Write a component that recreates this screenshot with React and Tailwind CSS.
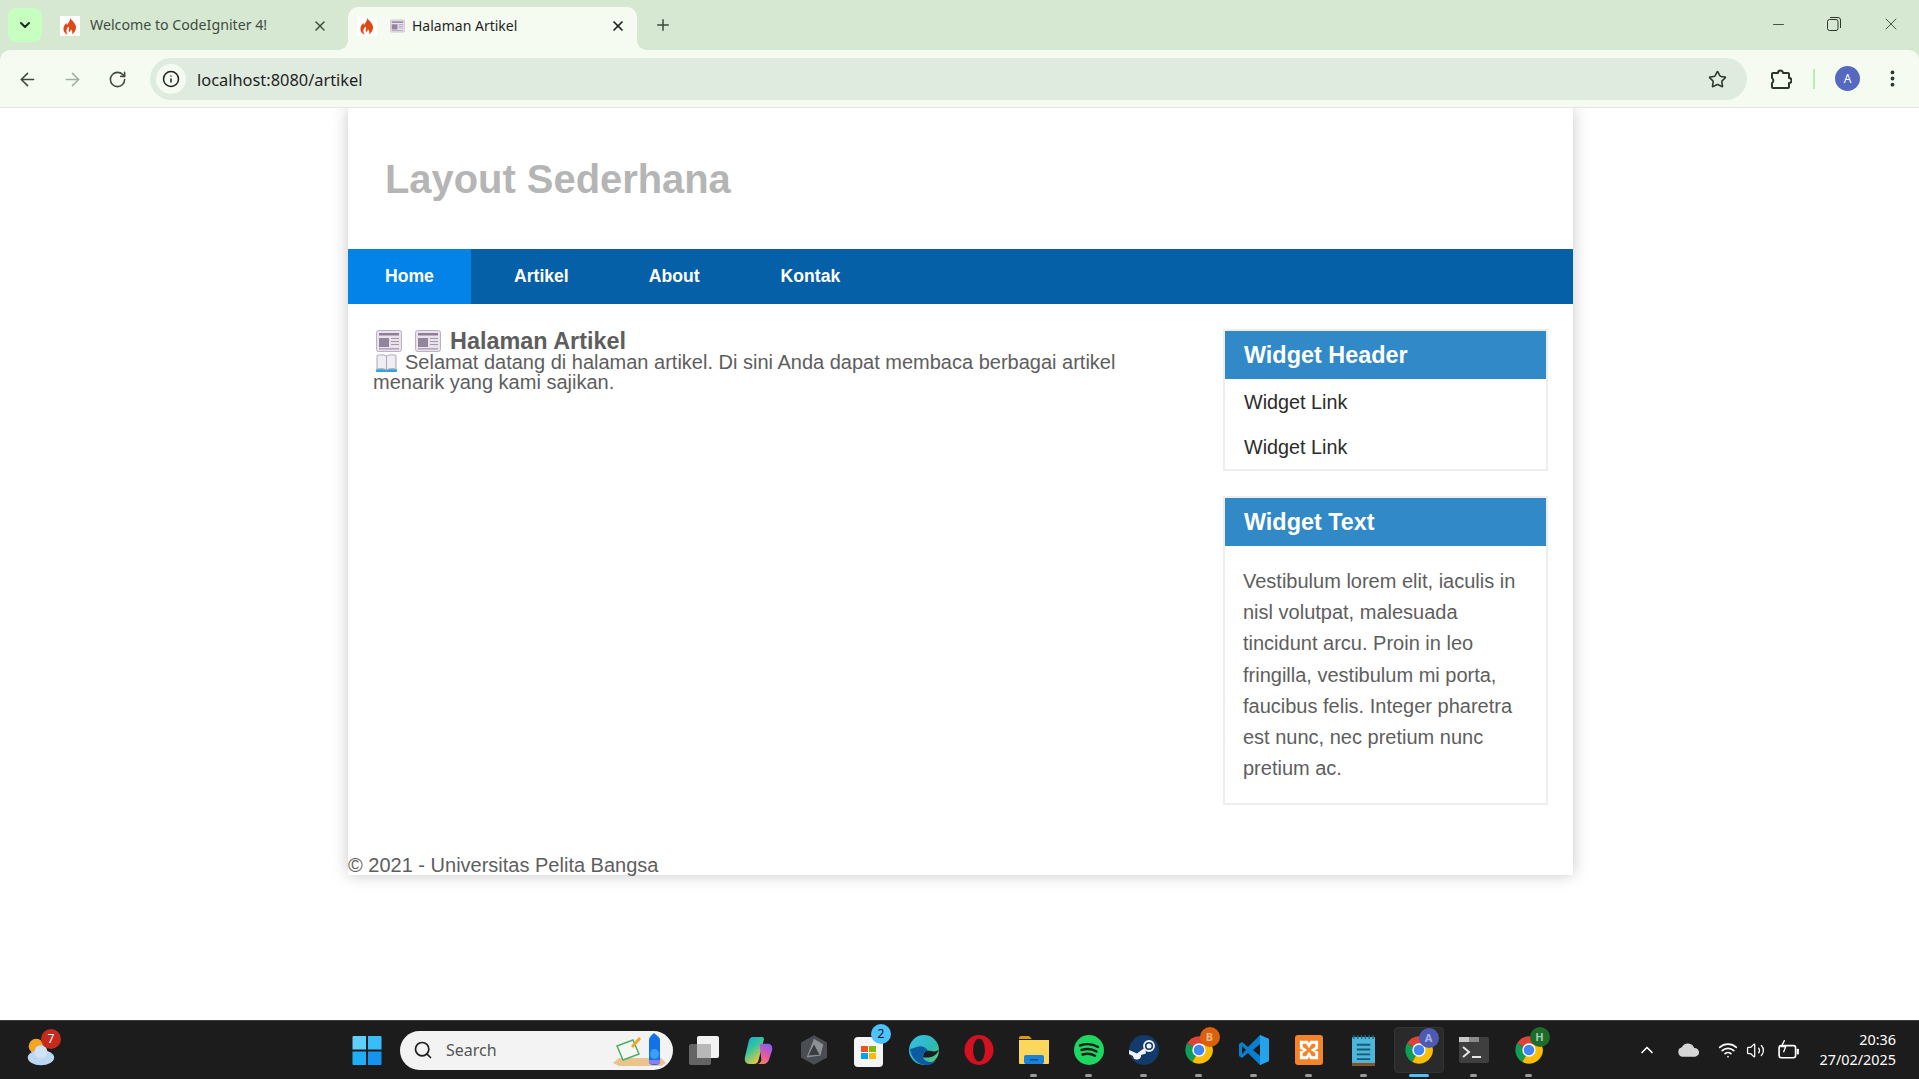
import { ArrowLeft, ArrowRight, RotateCw, Info, Star, ChevronDown, ChevronUp, X, Plus, Minus, EllipsisVertical, Search, Wifi, Volume2 } from 'lucide-react'

const Flame = () => (
  <span className="w-5 h-5 bg-white flex items-center justify-center shrink-0">
    <svg viewBox="0 0 20 20" className="w-[18px] h-5">
      <path fill="#dd4814" d="M10 .5c1 3 5.500 5 6.500 9.500.8 4-1.500 7.500-4.500 9.500 1-2 1-4-1-6 0 2-1 2-2 3.500-1-2 0-4.500 0-6.500-2 1-3 3-3 5 0 2 1 3 1.500 4-3.500-1-5.500-4.500-4.500-8.500.5-2 2-3 3-5 0 1 0 2 1 3 1-3 4-5 3-9z" />
    </svg>
  </span>
)

const NewsIcon = ({ className }) => (
  <svg viewBox="0 0 26 22" className={className}>
    <rect x="0.5" y="0.5" width="25" height="21" rx="2" fill="#e9e2ec" stroke="#bcb0c4" />
    <rect x="3" y="3" width="20" height="2.500" fill="#8d8096" />
    <rect x="3" y="8" width="10" height="9" fill="#93859c" />
    <path d="M15 8.500h8M15 11.500h8M15 14.500h8M3 18.800h20" stroke="#a397ab" strokeWidth="1.200" />
  </svg>
)

const BookIcon = () => (
  <svg viewBox="0 0 22 19" className="w-[21px] h-[18px] inline-block align-[-3px] ml-[3px] mr-[8px]">
    <path d="M0 16h22v3H0z" fill="#2fa4dd" />
    <path d="M1 1.500c3-1 7-1 10 .7 3-1.700 7-1.700 10-.7V16c-3-1-7-1-10 1-3-2-7-2-10-1z" fill="#f1edf5" stroke="#a9a3b5" />
    <path d="M11 2v15" stroke="#a9a3b5" />
  </svg>
)

const ChromeIcon = ({ badge, badgeBg, active }) => (
  <div className={`relative w-[50px] h-[46px] flex items-center justify-center rounded ${active ? 'bg-[#2a2a2a] border border-[#333]' : ''}`}>
    <svg viewBox="0 0 48 48" className="w-[32px] h-[32px]">
      <path fill="#db4437" d="M24 24 6 14A21 21 0 0 1 42 13z" />
      <path fill="#0f9d58" d="M24 24 14 42A21 21 0 0 1 6 14z" />
      <path fill="#fbbc05" d="M24 24h21a21 21 0 0 1-31 18z" />
      <path fill="#fbbc05" d="M24 15h18a21 21 0 0 1 3 9H30z" />
      <circle cx="24" cy="24" r="10" fill="#fff" />
      <circle cx="24" cy="24" r="8" fill="#4285f4" />
    </svg>
    <span className={`absolute top-0 right-[4px] w-[20px] h-[20px] rounded-full flex items-center justify-center text-[11px] font-bold ${badgeBg}`}>
      {badge}
    </span>
  </div>
)

const Dot = ({ blue }) =>
  blue ? <span className="w-5 h-[3px] rounded-full bg-[#4cc2ff]" /> : <span className="w-[7px] h-[3px] rounded-full bg-[#9a9a9a]" />

const TaskIcon = ({ children, running, blue }) => (
  <div className="relative w-[55px] h-full flex items-center justify-center">
    {children}
    {running && (
      <span className="absolute bottom-[2px] left-0 right-0 flex justify-center">
        <Dot blue={blue} />
      </span>
    )}
  </div>
)

function Chrome() {
  return (
    <div className="shrink-0 bg-[#d6e7d2] font-['Noto_Sans',sans-serif]">
      {/* Tabs */}
      <div className="h-[50px] flex items-end relative">
        <div className="w-[34px] h-[34px] mb-[8px] ml-2 rounded-lg bg-[#c6ffc0] flex items-center justify-center">
          <ChevronDown size={16} strokeWidth={3} className="text-[#1c2a1c]" />
        </div>
        <div className="w-[306px] h-[43px] flex items-center pl-[18px] pb-[6px] text-[#3f4d3f] text-[14.2px]">
          <Flame />
          <span className="ml-[10px] -mt-[1px]">Welcome to CodeIgniter 4!</span>
          <X size={16} strokeWidth={2.2} className="ml-auto mr-[20px] text-[#3d4a3d]" />
        </div>
        <div className="relative w-[289px] h-[43px] bg-[#f6fbf2] rounded-t-[10px] flex items-center pl-[9px] pb-[6px] text-[#1f1f1f] text-[14px]">
          <span className="absolute bottom-0 -left-[10px] w-[10px] h-[10px] bg-[radial-gradient(circle_at_0_0,transparent_10px,#f6fbf2_10px)]" />
          <span className="absolute bottom-0 -right-[10px] w-[10px] h-[10px] bg-[radial-gradient(circle_at_100%_0,transparent_10px,#f6fbf2_10px)]" />
          <Flame />
          <NewsIcon className="w-[15px] h-[14px] ml-[13px] mt-[1px]" />
          <span className="ml-[7px] -mt-[1px]">Halaman Artikel</span>
          <X size={16} strokeWidth={2.6} className="ml-auto mr-[11px] text-[#1f1f1f]" />
        </div>
        <Plus size={18} strokeWidth={2} className="ml-[17px] mb-[16px] text-[#3d4a3d]" />
        <div className="ml-auto flex h-full items-start text-[#2c372c]">
          <div className="w-[56px] h-[48px] flex items-center justify-center"><Minus size={17} strokeWidth={1.2} /></div>
          <div className="w-[56px] h-[48px] flex items-center justify-center">
            <svg viewBox="0 0 14 14" className="w-[14px] h-[14px]" fill="none" stroke="currentColor" strokeWidth="1">
              <rect x="0.5" y="2.500" width="10.500" height="11" rx="2" />
              <path d="M3 .5h8a2.500 2.500 0 0 1 2.500 2.500v8" />
            </svg>
          </div>
          <div className="w-[57px] h-[48px] flex items-center justify-center"><X size={20} strokeWidth={1} /></div>
        </div>
      </div>
      {/* Toolbar */}
      <div className="h-[58px] pt-px bg-[#f6fbf2] border-b border-[#dfe8db] rounded-t-[10px] flex items-center text-[#3d4a3d]">
        <div className="w-[150px] flex pl-[17px] gap-[24px]">
          <ArrowLeft size={21} strokeWidth={1.8} />
          <ArrowRight size={21} strokeWidth={1.8} className="text-[#a5aea3]" />
          <RotateCw size={19} strokeWidth={2} className="mt-[1px] ml-[1px]" />
        </div>
        <div className="w-[1597px] h-[42px] rounded-full bg-[#e0ebdf] flex items-center pl-[6px]">
          <div className="w-[30px] h-[30px] rounded-full bg-[#f6fbf2] flex items-center justify-center text-[#1f1f1f]">
            <Info size={18} strokeWidth={2} />
          </div>
          <span className="ml-[11px] mt-[2px] text-[#1f1f1f] text-[16.4px]">localhost:8080/artikel</span>
          <Star size={19} strokeWidth={2} className="ml-auto mr-[20px] text-[#2c372c]" />
        </div>
        <svg viewBox="0 0 22 22" className="ml-[23px] w-[22px] h-[22px] text-[#2c372c]" fill="none" stroke="currentColor" strokeWidth="2" strokeLinejoin="round">
          <path d="M3 5h5a2.500 2.500 0 0 1 5 0h5a1 1 0 0 1 1 1v4a2.500 2.500 0 0 1 0 5v4a1 1 0 0 1-1 1H3a1 1 0 0 1-1-1v-4a3 3 0 0 0 0-5V6a1 1 0 0 1 1-1z" />
        </svg>
        <span className="ml-[21px] w-[2px] h-5 bg-[#bdecb5]" />
        <span className="ml-[20px] w-[25px] h-[25px] -mt-[1px] rounded-full bg-[#5669c1] text-white text-[12px] flex items-center justify-center">A</span>
        <EllipsisVertical size={21} strokeWidth={2.4} className="ml-[22px] -mt-[1px] text-[#2c372c]" />
      </div>
    </div>
  )
}

function Widget({ title, children }) {
  return (
    <div className="border-2 border-[#eeeeee]">
      <h3 className="h-[48px] pt-[2px] bg-[#3189c7] text-white font-bold text-[23.4px] flex items-center pl-[19px]">{title}</h3>
      {children}
    </div>
  )
}

function Page() {
  return (
    <div className="flex-1 bg-white overflow-hidden font-['Liberation_Sans',sans-serif] text-[#5e5e5e]">
      <div className="ml-[348px] w-[1225px] bg-white shadow-[0_0_15px_rgba(0,0,0,0.22)]">
        <header className="h-[141px] pt-[2px] flex items-center pl-[37px]">
          <h1 className="font-bold text-[39.9px] text-[#b5b5b5]">Layout Sederhana</h1>
        </header>
        <nav className="h-[55px] bg-[#0560a8] flex text-white font-bold text-[17.6px]">
          <a className="w-[123px] bg-[#0382e8] flex items-center pl-[37px]">Home</a>
          <a className="ml-[43px] flex items-center">Artikel</a>
          <a className="ml-[80px] flex items-center">About</a>
          <a className="ml-[81px] flex items-center">Kontak</a>
        </nav>
        <div className="flex justify-between pl-[25px] pr-[25px] pt-[25px]">
          <main className="w-[775px]">
            <h2 className="flex items-center font-bold text-[23.4px] leading-[22px] mt-[1px]">
              <NewsIcon className="w-[26px] h-[22px] ml-[3px]" />
              <NewsIcon className="w-[26px] h-[22px] ml-[13px]" />
              <span className="ml-[9px]">Halaman Artikel</span>
            </h2>
            <p className="text-[20px] leading-[19.6px] mt-[1px]">
              <BookIcon />Selamat datang di halaman artikel. Di sini Anda dapat membaca berbagai artikel menarik yang kami sajikan.
            </p>
          </main>
          <aside className="w-[325px] flex flex-col gap-[25px]">
            <Widget title="Widget Header">
              <div className="text-[#2b2b2b] text-[19.8px] pl-[19px] pt-[1px] flex flex-col">
                <a className="h-[46px] flex items-center">Widget Link</a>
                <a className="h-[43px] flex items-center">Widget Link</a>
              </div>
            </Widget>
            <Widget title="Widget Text">
              <p className="text-[20px] leading-[31.2px] pl-[18px] pr-[17px] pt-[20px] pb-[19px]">
                Vestibulum lorem elit, iaculis in nisl volutpat, malesuada tincidunt arcu. Proin in leo fringilla, vestibulum mi porta, faucibus felis. Integer pharetra est nunc, nec pretium nunc pretium ac.
              </p>
            </Widget>
          </aside>
        </div>
        <footer className="mt-[50px] text-[20px] leading-[20px]">© 2021 - Universitas Pelita Bangsa</footer>
      </div>
    </div>
  )
}

function Taskbar() {
  return (
    <div className="h-[59px] shrink-0 bg-[#1c1c1c] border-t border-[#3a3a3a] flex items-center text-white font-['Noto_Sans',sans-serif]">
      {/* Weather */}
      <div className="relative w-[55px] ml-[12px] h-full flex items-center justify-center">
        <svg viewBox="0 0 36 36" className="w-[34px] h-[34px] mt-[2px]">
          <circle cx="14" cy="13" r="8" fill="#f5a524" />
          <ellipse cx="19" cy="25" rx="14" ry="8" fill="#bcd7f2" />
          <circle cx="19" cy="19" r="7" fill="#cfe2f7" />
        </svg>
        <span className="absolute top-[8px] right-[6px] w-[20px] h-[20px] rounded-full bg-[#c42b1c] flex items-center justify-center text-[12px]">7</span>
      </div>
      {/* Start */}
      <div className="ml-[277px] w-[46px] flex items-center justify-center">
        <svg viewBox="0 0 30 30" className="w-[30px] h-[29px]">
          <path fill="#5ed0fb" d="M0 1a1 1 0 0 1 1-1h13v14H0z" />
          <path fill="#38bdf8" d="M16 0h13a1 1 0 0 1 1 1v13H16z" />
          <path fill="#1faef5" d="M0 16h14v14H1a1 1 0 0 1-1-1z" />
          <path fill="#1594ef" d="M16 16h14v13a1 1 0 0 1-1 1H16z" />
        </svg>
      </div>
      {/* Search */}
      <div className="ml-[10px] w-[273px] h-[39px] rounded-full bg-[#f3f3f3] flex items-center pl-[13px] text-[#555] text-[16px]">
        <Search size={20} strokeWidth={2} className="text-[#1c1c1c]" />
        <span className="ml-[13px]">Search</span>
        <svg viewBox="0 0 56 36" className="ml-auto mr-[6px] w-[56px] h-[36px]">
          <path d="M2 31 8 26h42l5 5-5 3H8z" fill="#eac48c" />
          <path d="M6 14l16-6 6 14-16 6z" fill="#f4f7f1" stroke="#4caf6a" strokeWidth="1.500" />
          <path d="M20 14l8-9 2 2-8 9z" fill="#f5a524" />
          <path d="M38 8c0-3 3-5 5-7 2 2 6 4 6 7v22c0 2-2 3-4 3h-3c-2 0-4-1-4-3z" fill="#1372e6" />
          <ellipse cx="43.500" cy="22" rx="4.500" ry="5" fill="#3aa0f5" />
          <rect x="38" y="28" width="11" height="4" rx="1" fill="#8f7df0" />
        </svg>
      </div>
      {/* Pinned apps */}
      <div className="flex h-full ml-[3px]">
        <TaskIcon>
          <svg viewBox="0 0 30 30" className="w-[30px] h-[30px]">
            <rect x="8" y="1" width="22" height="22" rx="2" fill="#f2f2f2" />
            <rect x="0" y="9" width="22" height="21" rx="2" fill="#6a6a6a" fillOpacity="0.92" />
            <rect x="8" y="9" width="14" height="14" fill="#b8b8b8" />
          </svg>
        </TaskIcon>
        <TaskIcon>
          <svg viewBox="0 0 30 30" className="w-[29px] h-[29px]">
            <defs>
              <linearGradient id="cop" x1="0" y1="0" x2="0.6" y2="1">
                <stop offset="0" stopColor="#1c9ce8" />
                <stop offset="0.45" stopColor="#2fc6a0" />
                <stop offset="1" stopColor="#f5c63c" />
              </linearGradient>
              <linearGradient id="cop2" x1="0.7" y1="0" x2="0.3" y2="1">
                <stop offset="0" stopColor="#8a5cf0" />
                <stop offset="0.6" stopColor="#e85a9c" />
                <stop offset="1" stopColor="#f0885c" />
              </linearGradient>
            </defs>
            <path d="M9 1h9c2 0 3 1 2.500 3L15 25c-.5 2-2 4-5 4H6c-4 0-6-3-5-7L5 5c.5-2 2-4 4-4z" fill="url(#cop)" />
            <path d="M16 8h9c3 0 5 3 4 7l-3 9c-1 3-3 5-6 5h-7c3 0 4-2 5-4z" fill="url(#cop2)" />
          </svg>
        </TaskIcon>
        <TaskIcon>
          <svg viewBox="0 0 28 32" className="w-[26px] h-[30px]">
            <path d="M14 0l14 8v16l-14 8L0 24V8z" fill="#4a4d52" />
            <path d="M14 4l10 6-3 12-15 2z" fill="#8e9196" />
            <path d="M14 10l6 11-12 1z" fill="#3a3c40" />
          </svg>
        </TaskIcon>
        <TaskIcon>
          <div className="relative">
            <div className="w-[29px] h-[30px] mt-[4px] bg-[#f5f5f5] rounded-[4px] grid grid-cols-2 gap-[1px] content-center justify-center p-[7px]">
              <span className="h-[6px] bg-[#f25022]" />
              <span className="h-[6px] bg-[#7fba00]" />
              <span className="h-[6px] bg-[#00a4ef]" />
              <span className="h-[6px] bg-[#ffb900]" />
            </div>
            <span className="absolute -top-[9px] -right-[8px] w-[20px] h-[20px] rounded-full bg-[#4cc2ff] text-[#111] text-[12px] flex items-center justify-center">2</span>
          </div>
        </TaskIcon>
        <TaskIcon>
          <svg viewBox="0 0 30 30" className="w-[30px] h-[30px]">
            <defs>
              <linearGradient id="edge" x1="0" y1="0" x2="1" y2="1">
                <stop offset="0" stopColor="#35c1f1" />
                <stop offset="0.6" stopColor="#2fb8b0" />
                <stop offset="1" stopColor="#66d36e" />
              </linearGradient>
            </defs>
            <circle cx="15" cy="15" r="15" fill="url(#edge)" />
            <path d="M1 14C2 22 8 30 18 30c4 0 7-2 9-4-5 2-12 1-13-4-1-3 2-5 5-6-2-4-7-6-11-4C4 13 2 14 1 14z" fill="#0c59a4" />
            <path d="M14 22c0-4 3-7 8-6 4 1 7 0 8-2-1 4-4 7-8 8-3 .5-6 1-8 0z" fill="#1c1c1c" />
          </svg>
        </TaskIcon>
        <TaskIcon>
          <svg viewBox="0 0 30 30" className="w-[30px] h-[30px]">
            <ellipse cx="15" cy="15" rx="14.500" ry="15" fill="#d5101f" />
            <ellipse cx="15" cy="15" rx="6" ry="11.500" fill="#1c1c1c" />
          </svg>
        </TaskIcon>
        <TaskIcon running>
          <svg viewBox="0 0 30 28" className="w-[30px] h-[30px]">
            <path d="M0 2a2 2 0 0 1 2-2h8l3 3h-13z" fill="#d99a0c" />
            <path d="M0 4h30v23a1 1 0 0 1-1 1H1a1 1 0 0 1-1-1z" fill="#fbd75b" />
            <rect x="5" y="19" width="20" height="9" rx="2" fill="#1a82d8" />
            <rect x="11" y="23" width="8" height="1.500" fill="#0c4f8f" />
          </svg>
        </TaskIcon>
        <TaskIcon running>
          <svg viewBox="0 0 30 30" className="w-[30px] h-[30px]">
            <circle cx="15" cy="15" r="15" fill="#1ed760" />
            <path d="M6 10.500c6-2 13-1.500 18 1.500M7.500 15c5-1.500 11-1 15 1.500M8.500 19.500c4-1 9-.8 12.500 1.200" stroke="#1c1c1c" strokeWidth="2.400" strokeLinecap="round" fill="none" />
          </svg>
        </TaskIcon>
        <TaskIcon running>
          <svg viewBox="0 0 30 30" className="w-[30px] h-[30px]">
            <circle cx="15" cy="15" r="15" fill="#123a6b" />
            <path d="M0 15l8 3.500 8-6 1 6-5 1.500a4 4 0 0 1-8 1L0 19z" fill="#f2f5f8" />
            <circle cx="20" cy="11" r="5" fill="none" stroke="#f2f5f8" strokeWidth="1.800" />
            <circle cx="20" cy="11" r="2.500" fill="#f2f5f8" />
          </svg>
        </TaskIcon>
        <TaskIcon running>
          <ChromeIcon badge="B" badgeBg="bg-[#d9600c] text-[#f2b78a]" />
        </TaskIcon>
        <TaskIcon running>
          <svg viewBox="0 0 30 30" className="w-[30px] h-[30px]">
            <path d="M21 0l9 4v22l-9 4-12-12-6 5-3-2v-12l3-2 6 5z" fill="#0a7fce" />
            <path d="M21 0l9 4v22l-9 4z" fill="#24a2ec" />
            <path d="M21 9l-7 6 7 6z" fill="#1c1c1c" />
            <path d="M3 11l4 4-4 4z" fill="#1c1c1c" />
          </svg>
        </TaskIcon>
        <TaskIcon running>
          <div className="w-[28px] h-[30px] rounded-[3px] bg-[#f4842c] flex items-center justify-center">
            <svg viewBox="0 0 20 20" className="w-[22px] h-[22px]">
              <path d="M3 3h5l2 3 2-3h5v5l-3 2 3 2v5h-5l-2-3-2 3H3v-5l3-2-3-2z" fill="none" stroke="#fff" strokeWidth="2.600" />
            </svg>
          </div>
        </TaskIcon>
        <TaskIcon running>
          <svg viewBox="0 0 24 32" className="w-[23px] h-[31px]">
            <rect x="0" y="2" width="24" height="30" rx="1" fill="#4db6d9" />
            <rect x="0" y="29" width="24" height="3" fill="#8a4f22" />
            <path d="M2 0v4M6 0v4M10 0v4M14 0v4M18 0v4M22 0v4" stroke="#1c6f8f" strokeWidth="1.500" />
            <path d="M5 10h14M5 15h14M5 20h14M5 25h14" stroke="#155a78" strokeWidth="2" />
          </svg>
        </TaskIcon>
        <TaskIcon running blue>
          <ChromeIcon badge="A" badgeBg="bg-[#4c5bb0] text-[#aab4ea]" active />
        </TaskIcon>
        <TaskIcon running>
          <svg viewBox="0 0 30 26" className="w-[30px] h-[26px]">
            <rect width="30" height="26" rx="2" fill="#3f3f3f" />
            <rect width="10" height="5" fill="#c9c9c9" />
            <rect x="10" width="10" height="5" fill="#8a8a8a" />
            <path d="M4 10l6 5-6 5" fill="none" stroke="#e6e6e6" strokeWidth="2" />
            <path d="M13 20h9" stroke="#e6e6e6" strokeWidth="2" />
          </svg>
        </TaskIcon>
        <TaskIcon running>
          <ChromeIcon badge="H" badgeBg="bg-[#1f6b2a] text-[#9fd0a6]" />
        </TaskIcon>
      </div>
      {/* Tray */}
      <div className="ml-auto flex items-center mr-[23px]">
        <ChevronUp size={20} strokeWidth={2} />
        <svg viewBox="0 0 22 14" className="ml-[21px] w-[21px] h-[14px]">
          <path d="M5 14a5 5 0 0 1-1-9.800A7 7 0 0 1 17 5a4.500 4.500 0 0 1 1 9z" fill="#d5d5d5" />
        </svg>
        <Wifi size={20} strokeWidth={2} className="ml-[19px]" />
        <Volume2 size={19} strokeWidth={1.6} className="ml-[8px]" />
        <svg viewBox="0 0 20 18" className="ml-[13px] w-[22px] h-[20px]" fill="none" stroke="#fff" strokeWidth="1.500">
          <rect x="1" y="5" width="15" height="11" rx="2" />
          <path d="M18 8v5" strokeWidth="2" />
          <path d="M6 0 3 6h4L5 11" strokeWidth="1.200" />
        </svg>
        <div className="ml-[19px] text-right text-[14.4px] leading-[20px]">
          <div>20:36</div>
          <div>27/02/2025</div>
        </div>
      </div>
    </div>
  )
}

export default function App() {
  return (
    <div className="h-screen w-full flex flex-col overflow-hidden">
      <Chrome />
      <Page />
      <Taskbar />
    </div>
  )
}
